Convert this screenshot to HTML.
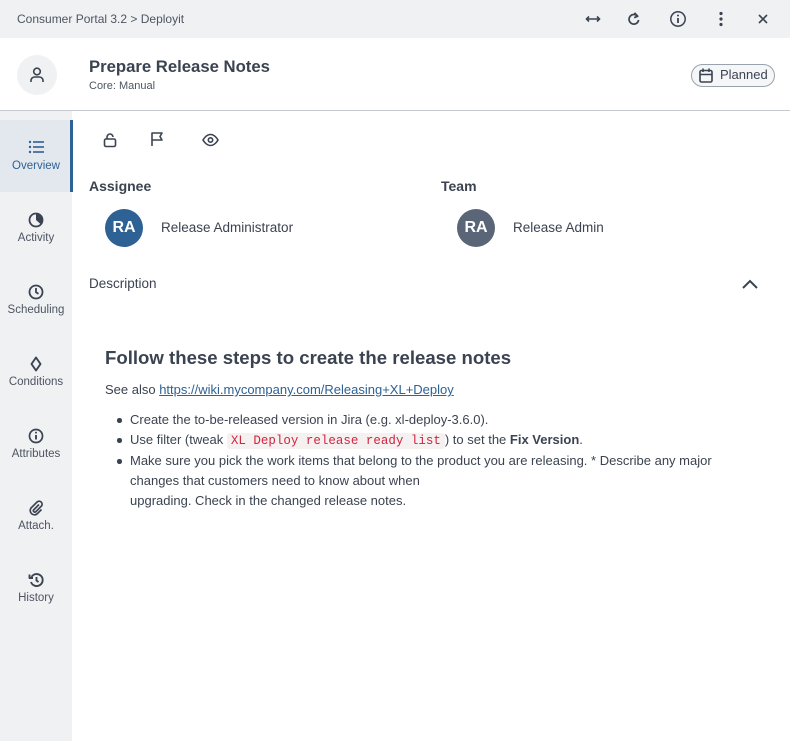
<!DOCTYPE html>
<html><head><style>
*{margin:0;padding:0;box-sizing:border-box}
body{width:790px;height:741px;overflow:hidden;font-family:"Liberation Sans",sans-serif;color:#3b4351;background:#fff;position:relative}
.abs{position:absolute}
.top{left:0;top:0;width:790px;height:38px;background:#f0f1f3}
.hdr{left:0;top:38px;width:790px;height:73px;border-bottom:1px solid #c5c8ce;background:#fff}
.side{left:0;top:111px;width:72px;height:630px;background:#f0f1f3}
.nav{position:absolute;left:0;width:72px;height:72px;text-align:center;font-size:11.5px;color:#4d5562}
.nav svg{position:absolute;left:28px;top:20px}
.nav span{position:absolute;left:0;right:0;top:40px}
.av{border-radius:50%;color:#fff;font-weight:bold;font-size:16px;text-align:center;line-height:38px;width:38px;height:38px}
ul{list-style:none}
li{position:relative;padding-left:25px;font-size:13px;line-height:20px}
li:before{content:"";position:absolute;left:12px;top:8px;width:4.5px;height:4.5px;border-radius:50%;background:#3b4351}
code{font-family:"Liberation Mono",monospace;color:#d0243f;background:#f6f1f1;padding:1px 4px;border-radius:3px;font-size:12.5px}
</style></head><body>
<div class="abs top"></div>
<div class="abs" style="left:17px;top:12px;font-size:12px;color:#4d5562">Consumer Portal 3.2 &gt; Deployit</div>
<svg class="abs" style="left:584px;top:12px" width="18" height="14" viewBox="0 0 18 14" fill="none" stroke="#3b4351" stroke-width="1.6"><path d="M3 7h12M5 4.5L2.5 7 5 9.5M13 4.5L15.5 7 13 9.5"/></svg>
<svg class="abs" style="left:626px;top:11px" width="16" height="16" viewBox="0 0 16 16" fill="none" stroke="#3b4351" stroke-width="1.7"><path d="M11.5 5.2A4.8 4.8 0 1 0 12.6 9"/><path d="M8.5 1.8l3.2 3.4-3.5 1.5" stroke-linejoin="round"/></svg>
<svg class="abs" style="left:669px;top:10px" width="18" height="18" viewBox="0 0 18 18" fill="none" stroke="#3b4351" stroke-width="1.5"><circle cx="9" cy="9" r="7.2"/><path d="M9 8v5" stroke-width="1.8"/><circle cx="9" cy="5.5" r="1" fill="#3b4351" stroke="none"/></svg>
<svg class="abs" style="left:718px;top:11px" width="6" height="16" viewBox="0 0 6 16" fill="#3b4351"><circle cx="3" cy="2.5" r="1.6"/><circle cx="3" cy="8" r="1.6"/><circle cx="3" cy="13.5" r="1.6"/></svg>
<svg class="abs" style="left:757px;top:13px" width="12" height="12" viewBox="0 0 12 12" stroke="#3b4351" stroke-width="1.6"><path d="M2 2l8 8M10 2l-8 8"/></svg>

<div class="abs hdr"></div>
<div class="abs" style="left:17px;top:55px;width:40px;height:40px;border-radius:50%;background:#f0f1f3"></div>
<svg class="abs" style="left:28px;top:66px" width="18" height="18" viewBox="0 0 18 18" fill="none" stroke="#3b4351" stroke-width="1.6"><circle cx="9" cy="5.5" r="3.3"/><path d="M3 16v-1.5a3.5 3.5 0 0 1 3.5-3.5h5a3.5 3.5 0 0 1 3.5 3.5V16"/></svg>
<div class="abs" style="left:89px;top:57px;font-size:16.7px;font-weight:bold;color:#3b4351">Prepare Release Notes</div>
<div class="abs" style="left:89px;top:80px;font-size:11px;color:#4d5562">Core: Manual</div>
<div class="abs" style="left:691px;top:64px;width:84px;height:23px;border:1px solid #9aa2ad;border-radius:12px;background:#f5f6f8"></div>
<svg class="abs" style="left:698px;top:67px" width="16" height="17" viewBox="0 0 16 17" fill="none" stroke="#3b4351" stroke-width="1.6"><rect x="2" y="3.5" width="12" height="11.5" rx="1.5"/><path d="M2 7.5h12M5 1.5v3.5M11 1.5v3.5"/></svg>
<div class="abs" style="left:720px;top:67px;font-size:13px;color:#3b4351">Planned</div>

<div class="abs side"></div>
<div class="abs" style="left:0;top:120px;width:73px;height:72px;background:#e3e8ef;border-right:3px solid #2e6194"></div>
<div class="nav" style="top:120px;color:#2e6194"><svg width="16" height="14" viewBox="0 0 16 14" fill="#2e6194"><circle cx="2" cy="2" r="1.2"/><circle cx="2" cy="7" r="1.2"/><circle cx="2" cy="12" r="1.2"/><rect x="5" y="1.2" width="11" height="1.6"/><rect x="5" y="6.2" width="11" height="1.6"/><rect x="5" y="11.2" width="11" height="1.6"/></svg><span>Overview</span></div>
<div class="nav" style="top:192px"><svg width="16" height="16" viewBox="0 0 16 16"><circle cx="8" cy="8" r="6.5" fill="none" stroke="#3b4351" stroke-width="1.8"/><path d="M8 8V2a6 6 0 0 1 4.5 10z" fill="#3b4351"/></svg><span>Activity</span></div>
<div class="nav" style="top:264px"><svg width="16" height="16" viewBox="0 0 16 16" fill="none" stroke="#3b4351" stroke-width="1.8"><circle cx="8" cy="8" r="6.5"/><path d="M8 4v4.3l2.5 1.5"/></svg><span>Scheduling</span></div>
<div class="nav" style="top:336px"><svg width="16" height="16" viewBox="0 0 16 16" fill="none" stroke="#3b4351" stroke-width="1.9"><path d="M8 1.5L12.5 8 8 14.5 3.5 8z" stroke-linejoin="round"/></svg><span>Conditions</span></div>
<div class="nav" style="top:408px"><svg width="16" height="16" viewBox="0 0 16 16" fill="none" stroke="#3b4351" stroke-width="1.7"><circle cx="8" cy="8" r="6.5"/><path d="M8 7v4.5" stroke-width="1.9"/><circle cx="8" cy="4.6" r="1" fill="#3b4351" stroke="none"/></svg><span>Attributes</span></div>
<div class="nav" style="top:480px"><svg width="16" height="16" viewBox="0 0 16 16" fill="none" stroke="#3b4351" stroke-width="1.7"><path d="M11 4.5L5.5 10a1.5 1.5 0 0 0 2 2l6-6a3 3 0 0 0-4.2-4.2L3 8a4.3 4.3 0 0 0 6 6l4.5-4.5"/></svg><span>Attach.</span></div>
<div class="nav" style="top:552px"><svg width="16" height="16" viewBox="0 0 16 16" fill="none" stroke="#3b4351" stroke-width="1.9"><path d="M3.5 5A6 6 0 1 1 3 10"/><path d="M1.5 2.5v3.5H5" stroke-linejoin="round"/><path d="M8.5 5v3.5l2 1.5"/></svg><span>History</span></div>

<svg class="abs" style="left:102px;top:132px" width="16" height="16" viewBox="0 0 16 16" fill="none" stroke="#3b4351" stroke-width="1.6"><rect x="2.5" y="7" width="11" height="7.5" rx="1.5"/><path d="M5 7V5a3 3 0 0 1 6 0"/></svg>
<svg class="abs" style="left:149px;top:131px" width="16" height="16" viewBox="0 0 16 16" fill="none" stroke="#3b4351" stroke-width="1.6" stroke-linejoin="round"><path d="M3 15V2h10l-2 3.5 2 3.5H3"/></svg>
<svg class="abs" style="left:202px;top:133px" width="17" height="14" viewBox="0 0 17 14" fill="none" stroke="#3b4351" stroke-width="1.6"><path d="M1 7s3-5.5 7.5-5.5S16 7 16 7s-3 5.5-7.5 5.5S1 7 1 7z"/><circle cx="8.5" cy="7" r="2.2"/></svg>

<div class="abs" style="left:89px;top:178px;font-size:14px;font-weight:bold">Assignee</div>
<div class="abs" style="left:441px;top:178px;font-size:14px;font-weight:bold">Team</div>
<div class="abs av" style="left:105px;top:209px;background:#2e6194">RA</div>
<div class="abs" style="left:161px;top:220px;font-size:13.5px">Release Administrator</div>
<div class="abs av" style="left:457px;top:209px;background:#5a6678">RA</div>
<div class="abs" style="left:513px;top:220px;font-size:13.5px">Release Admin</div>

<div class="abs" style="left:89px;top:276px;font-size:13.5px">Description</div>
<svg class="abs" style="left:741px;top:278px" width="18" height="12" viewBox="0 0 18 12" fill="none" stroke="#3b4351" stroke-width="2"><path d="M2 10l7-7 7 7"/></svg>

<div class="abs" style="left:105px;top:347px;font-size:18.6px;font-weight:bold;color:#3b4351">Follow these steps to create the release notes</div>
<div class="abs" style="left:105px;top:382px;font-size:13px">See also <span style="color:#2e6194;text-decoration:underline">https://wiki.mycompany.com/Releasing+XL+Deploy</span></div>
<ul class="abs" style="left:105px;top:410px;width:650px">
<li>Create the to-be-released version in Jira (e.g. xl-deploy-3.6.0).</li>
<li>Use filter (tweak <code>XL Deploy release ready list</code>) to set the <b>Fix Version</b>.</li>
<li>Make sure you pick the work items that belong to the product you are releasing. * Describe any major<br>changes that customers need to know about when<br>upgrading. Check in the changed release notes.</li>
</ul>
</body></html>
